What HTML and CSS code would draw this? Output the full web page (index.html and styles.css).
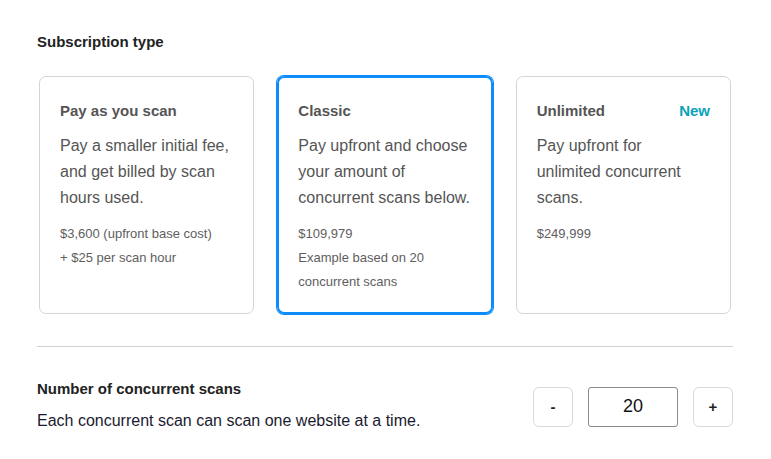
FILE: index.html
```html
<!DOCTYPE html>
<html>
<head>
<meta charset="utf-8">
<link rel="stylesheet" href="styles.css">
</head>
<body>
<div class="wrap">
  <h2 class="section-title">Subscription type</h2>
  <div class="cards">
    <div class="card">
      <div class="card-head"><span class="card-title">Pay as you scan</span></div>
      <p class="card-desc">Pay a smaller initial fee, and get billed by scan hours used.</p>
      <p class="card-price">$3,600 (upfront base cost)<br>+ $25 per scan hour</p>
    </div>
    <div class="card selected">
      <div class="card-head"><span class="card-title">Classic</span></div>
      <p class="card-desc">Pay upfront and choose your amount of concurrent scans below.</p>
      <p class="card-price">$109,979<br>Example based on 20 concurrent scans</p>
    </div>
    <div class="card">
      <div class="card-head"><span class="card-title">Unlimited</span><span class="badge">New</span></div>
      <p class="card-desc">Pay upfront for unlimited concurrent scans.</p>
      <p class="card-price">$249,999</p>
    </div>
  </div>
  <hr class="divider">
  <div class="scans-row">
    <div class="scans-text">
      <h3 class="scans-title">Number of concurrent scans</h3>
      <p class="scans-desc">Each concurrent scan can scan one website at a time.</p>
    </div>
    <div class="stepper">
      <button class="step-btn">-</button>
      <input class="step-input" type="text" value="20">
      <button class="step-btn">+</button>
    </div>
  </div>
</div>
</body>
</html>
```
FILE: styles.css
```css
* { box-sizing: border-box; }
html, body { margin: 0; padding: 0; background: #fff; }
body { font-family: "Liberation Sans", Arial, sans-serif; }
.wrap { width: 696px; margin-left: 37px; padding-top: 32px; }
.section-title { margin: 0; font-size: 15px; line-height: 20px; font-weight: 700; color: #222; }
.cards {
  display: grid;
  grid-template-columns: repeat(3, 1fr);
  gap: 23px;
  margin: 24px 2px 0 2px;
}
.card {
  height: 238px;
  border: 1px solid #d3d6d8;
  border-radius: 7px;
  padding: 20px 20px;
}
.card.selected {
  border: 2px solid #0c8dfb;
  box-shadow: 0 0 0 1px #0c8dfb;
  padding: 19px 19px;
}
.card-head { display: flex; justify-content: space-between; align-items: center; height: 26px; }
.card-title { font-size: 15px; font-weight: 700; color: #555; }
.badge { font-size: 15px; font-weight: 700; color: #0aa2b8; }
.card-desc { margin: 10px 0 0; font-size: 16px; line-height: 26px; color: #555; }
.card-price { margin: 11px 0 0; font-size: 13px; line-height: 24px; color: #5e5e5e; }
.divider { margin: 32px 0 0; border: 0; border-top: 1px solid #cdd1d1; height: 0; }
.scans-row { display: flex; justify-content: space-between; align-items: center; margin-top: 32px; }
.scans-title { margin: 0; font-size: 15px; line-height: 20px; font-weight: 700; color: #222; }
.scans-desc { margin: 9px 0 0; font-size: 16px; line-height: 26px; color: #1b1b2f; }
.stepper { display: flex; align-items: center; gap: 15px; }
.step-btn {
  width: 40px; height: 40px;
  border: 1px solid #d6d9db;
  border-radius: 6px;
  background: #fff;
  font-family: "Liberation Sans", Arial, sans-serif;
  font-size: 15px; font-weight: 700; color: #222;
  padding: 0;
}
.step-input {
  width: 90px; height: 40px;
  border: 1px solid #8a8a8a;
  border-radius: 3px;
  text-align: center;
  font-family: "Liberation Sans", Arial, sans-serif;
  font-size: 18px; color: #111;
  padding: 0;
}
```
